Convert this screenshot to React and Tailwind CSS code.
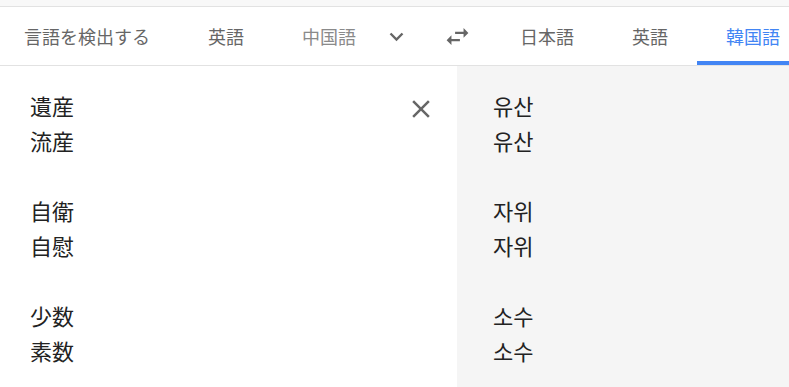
import React from "react";

const jp = { fontFamily: '"Noto Sans CJK JP", "Noto Sans", sans-serif' };
const kr = { fontFamily: '"Noto Sans CJK KR", "Noto Sans", sans-serif' };

function Tab({ children, active, first, faded }) {
  return (
    <div
      className={`relative h-full shrink-0 whitespace-nowrap flex items-center ${first ? "pl-[24px]" : "pl-[29px]"} pr-[29px] text-[18px] ${
        active ? "text-[#4285f4]" : faded ? "text-[#8a8a8a]" : "text-[#666666]"
      }`}
    >
      <span className="leading-none">{children}</span>
      {active && <div className="absolute left-0 right-[-40px] bottom-0 h-[4px] bg-[#4285f4]" />}
    </div>
  );
}

export default function App() {
  const left = ["遺産", "流産", "", "自衛", "自慰", "", "少数", "素数"];
  const right = ["유산", "유산", "", "자위", "자위", "", "소수", "소수"];
  return (
    <div className="w-[789px] h-[387px] overflow-hidden flex flex-col bg-white" style={jp}>
      <div className="h-[7px] bg-[#f8f8f8] border-b border-[#e2e2e2] shrink-0" />
      <div className="h-[59px] shrink-0 flex items-stretch border-b border-[#e2e2e2] overflow-hidden">
        <Tab first>言語を検出する</Tab>
        <Tab>英語</Tab>
        <Tab faded>中国語</Tab>
        <div className="flex items-center ml-[3px] shrink-0">
          <svg width="17" height="17" viewBox="0 0 17 17">
            <path d="M2.5 5.5 L8.5 11.5 L14.5 5.5" fill="none" stroke="#666" strokeWidth="2.4" />
          </svg>
        </div>
        <div className="flex items-center ml-[38px] shrink-0">
          <svg width="29" height="29" viewBox="0 0 24 24">
            <path
              fill="#666"
              d="M6.99 11L3 15l3.99 4v-3H14v-2H6.99v-3zM21 9l-3.99-4v3H10v2h7.01v3L21 9z"
            />
          </svg>
        </div>
        <div className="ml-[19px] flex h-full shrink-0">
          <Tab>日本語</Tab>
          <Tab>英語</Tab>
          <Tab active>韓国語</Tab>
        </div>
      </div>
      <div className="flex flex-1 min-h-0">
        <div className="w-[457px] shrink-0 bg-white relative pl-[30px] pt-[22px]">
          <div className="text-[22px] leading-[35px] text-[#222]">
            {left.map((t, i) => (
              <div key={i} className="h-[35px]">{t}</div>
            ))}
          </div>
          <div className="absolute left-[406px] top-[28px]">
            <svg width="30" height="30" viewBox="0 0 24 24">
              <path
                fill="#666"
                d="M19 6.41L17.59 5 12 10.59 6.41 5 5 6.41 10.59 12 5 17.59 6.41 19 12 13.41 17.59 19 19 17.59 13.41 12z"
              />
            </svg>
          </div>
        </div>
        <div className="flex-1 bg-[#f5f5f5] pl-[36px] pt-[22px]" style={kr}>
          <div className="text-[22px] leading-[35px] text-[#222]">
            {right.map((t, i) => (
              <div key={i} className="h-[35px]">{t}</div>
            ))}
          </div>
        </div>
      </div>
    </div>
  );
}
